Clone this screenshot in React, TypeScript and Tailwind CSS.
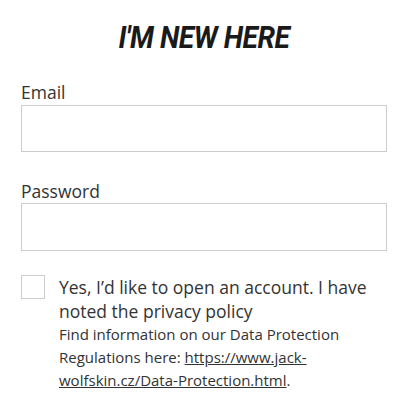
import React from 'react';

export default function App() {
  return (
    <div className="w-[412px] h-[409px] bg-white text-[#333] font-['Open_Sans',sans-serif] overflow-hidden">
      <div className="pl-[21px] w-[387px]">
        <h1 className="pt-[17px] text-center font-['Roboto',sans-serif] font-bold italic text-[32px] leading-[40px] tracking-[-0.5px] text-[#1a1a1a] scale-x-[0.88]">
          I'M NEW HERE
        </h1>

        <label className="block mt-[23px] text-[17.5px] leading-[24px]">Email</label>
        <input type="email" className="block w-[366px] h-[47px] mt-[1px] border border-[#ccc] bg-white" />

        <label className="block mt-[27px] text-[17.5px] leading-[24px]">Password</label>
        <input type="password" className="block w-[366px] h-[48px] border border-[#ccc] bg-white" />

        <div className="flex mt-[24px] gap-[14px]">
          <div className="w-[24px] h-[24px] shrink-0 border border-[#ccc] bg-white" />
          <div>
            <p className="text-[17.5px] leading-[24px]">
              Yes, I’d like to open an account. I have noted the privacy policy
            </p>
            <p className="text-[15px] leading-[23px]">
              Find information on our Data Protection Regulations here:{' '}
              <a href="#" className="underline">https://www.jack-wolfskin.cz/Data-Protection.html</a>.
            </p>
          </div>
        </div>
      </div>
    </div>
  );
}
